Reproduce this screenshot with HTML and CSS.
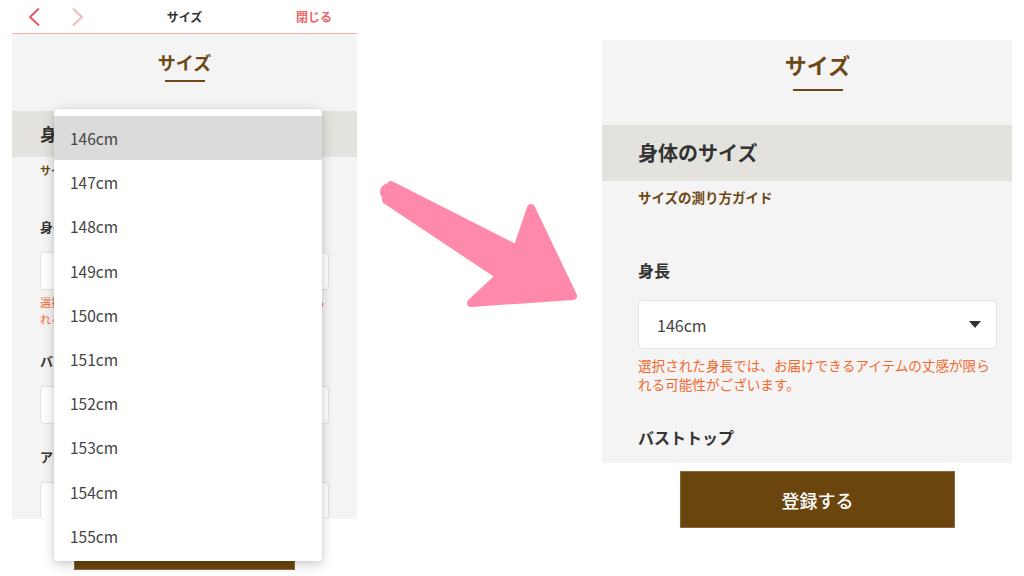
FILE: index.html
```html
<!DOCTYPE html>
<html lang="ja">
<head>
<meta charset="utf-8">
<title>サイズ</title>
<link rel="stylesheet" href="styles.css">
</head>
<body>
<div class="stage">
  <section class="phone">
    <header class="nav">
      <div class="nav-left">
        <svg class="chev chev-back" width="12" height="18" viewBox="0 0 12 18"><polyline points="10.5,1 2,9 10.5,17"/></svg>
        <svg class="chev chev-next" width="12" height="18" viewBox="0 0 12 18"><polyline points="1.5,1 10,9 1.5,17"/></svg>
      </div>
      <div class="nav-title">サイズ</div>
      <div class="nav-close">閉じる</div>
    </header>
    <div class="screen">
      <h1 class="title">サイズ</h1>
      <div class="band">身体のサイズ</div>
      <div class="body">
        <a class="guide">サイズの測り方ガイド</a>
        <div class="field field-first">
          <div class="label">身長</div>
          <div class="select"><span>146cm</span><i class="caret"></i></div>
          <p class="note">選択された身長では、お届けできるアイテムの丈感が限られる可能性がございます。</p>
        </div>
        <div class="field">
          <div class="label">バストトップ</div>
          <div class="select"><span></span><i class="caret"></i></div>
        </div>
        <div class="field">
          <div class="label">アンダーバスト</div>
          <div class="select"><span></span><i class="caret"></i></div>
        </div>
      </div>
    </div>
    <div class="foot"><button class="submit">登録する</button></div>
    <ul class="dropdown">
      <li class="selected">146cm</li>
      <li>147cm</li>
      <li>148cm</li>
      <li>149cm</li>
      <li>150cm</li>
      <li>151cm</li>
      <li>152cm</li>
      <li>153cm</li>
      <li>154cm</li>
      <li>155cm</li>
    </ul>
  </section>

  <div class="arrow-col">
    <svg class="arrow" width="245" height="576" viewBox="357 0 245 576">
      <circle cx="389" cy="192" r="9"/>
      <polygon points="391,185 517,249 531,208 573,296 471,303 500,276 386,200"/>
    </svg>
  </div>

  <div class="panel-col">
    <section class="panel">
      <h1 class="title">サイズ</h1>
      <div class="band">身体のサイズ</div>
      <div class="body">
        <a class="guide">サイズの測り方ガイド</a>
        <div class="field field-first">
          <div class="label">身長</div>
          <div class="select"><span>146cm</span><i class="caret"></i></div>
          <p class="note">選択された身長では、お届けできるアイテムの丈感が限られる可能性がございます。</p>
        </div>
        <div class="field">
          <div class="label">バストトップ</div>
          <div class="select"><span></span><i class="caret"></i></div>
        </div>
      </div>
    </section>
    <div class="panel-foot"><button class="submit">登録する</button></div>
  </div>
</div>
</body>
</html>
```

FILE: styles.css
```css
* { box-sizing: border-box; }

body {
  margin: 0;
  background: #ffffff;
  font-family: "Noto Sans CJK JP", "Noto Sans", sans-serif;
  color: #333333;
}

.stage {
  display: flex;
  width: 1024px;
  height: 576px;
  overflow: hidden;
}

/* ---------- left phone ---------- */
.phone {
  position: relative;
  flex: none;
  width: 345px;
  height: 576px;
  margin-left: 12px;
}

.nav {
  display: grid;
  grid-template-columns: 1fr auto 1fr;
  align-items: center;
  height: 34px;
  border-bottom: 1.5px solid #fbb3b3;
  background: #ffffff;
}

.nav-left {
  display: flex;
  align-items: center;
  gap: 32px;
  padding-left: 16px;
}

.chev { display: block; fill: none; stroke-width: 1.8; stroke-linecap: round; stroke-linejoin: round; }
.chev-back { stroke: #e6535b; }
.chev-next { stroke: #f6b6b8; }

.nav-title {
  font-size: 12px;
  font-weight: 700;
  color: #333333;
}

.nav-close {
  text-align: right;
  padding-right: 25px;
  font-size: 12px;
  font-weight: 700;
  color: #ea6468;
}

.screen {
  height: 484.5px;
  overflow: hidden;
  background: #f4f4f4;
}

.title {
  margin: 0;
  text-align: center;
  font-weight: 700;
  color: #6e4814;
}

.title::after {
  content: "";
  display: block;
  margin: 0 auto;
  background: #6e4814;
}

.phone .title {
  padding-top: 16px;
  font-size: 18px;
  line-height: 24px;
}

.phone .title::after {
  width: 40px;
  height: 2px;
  margin-top: 6px;
}

.band {
  background: #e3e2dd;
  font-weight: 700;
  color: #333333;
}

.phone .band {
  margin-top: 29px;
  height: 46px;
  line-height: 46px;
  padding-left: 28px;
  font-size: 17px;
}

.guide {
  display: block;
  font-weight: 700;
  color: #6e4814;
}

.phone .body { padding: 0 28px; }

.phone .guide {
  margin-top: 5px;
  font-size: 11px;
  line-height: 16px;
}

.label { font-weight: 700; color: #333333; }

.phone .field { margin-top: 24px; }
.phone .field-first { margin-top: 40px; }

.phone .label {
  font-size: 13px;
  line-height: 18px;
}

.select {
  display: flex;
  align-items: center;
  justify-content: space-between;
  background: #ffffff;
  border: 1px solid #e6e3dc;
  border-radius: 4px;
  color: #444444;
}

.phone .select {
  margin-top: 16px;
  height: 38px;
  padding: 0 14px 0 15px;
  font-size: 14px;
}

.caret {
  display: block;
  width: 0;
  height: 0;
  border-style: solid;
  border-color: #333333 transparent transparent transparent;
}

.phone .caret { border-width: 6px 5.5px 0 5.5px; }

.note {
  margin: 0;
  color: #f2692f;
}

.phone .note {
  margin-top: 4px;
  font-size: 11px;
  line-height: 17px;
}

.foot {
  display: flex;
  justify-content: center;
  padding-top: 4px;
}

.submit {
  display: block;
  border: 1px solid #8a6a3c;
  background: #6a450d;
  color: #ffffff;
  font-family: "Noto Sans CJK JP", "Noto Sans", sans-serif;
  font-weight: 500;
  padding: 0;
}

.phone .submit {
  width: 221px;
  height: 47px;
  font-size: 15px;
}

.dropdown {
  position: absolute;
  top: 109px;
  left: 42px;
  width: 268px;
  height: 452px;
  margin: 0;
  padding: 7px 0 0;
  list-style: none;
  background: #ffffff;
  border-radius: 4px;
  box-shadow: 0 3px 12px rgba(0, 0, 0, 0.22), 0 0 2px rgba(0, 0, 0, 0.08);
}

.dropdown li {
  display: flex;
  align-items: center;
  height: 44.2px;
  padding-left: 16px;
  font-size: 15.5px;
  color: #444444;
}

.dropdown li.selected { background: #dbdbdb; }

/* ---------- arrow ---------- */
.arrow-col {
  flex: none;
  width: 245px;
}

.arrow { display: block; }
.arrow circle { fill: #ff89aa; }
.arrow polygon {
  fill: #ff89aa;
  stroke: #ff89aa;
  stroke-width: 8;
  stroke-linejoin: round;
}

/* ---------- right panel ---------- */
.panel-col {
  flex: none;
  width: 410px;
  padding-top: 40px;
}

.panel {
  height: 423px;
  overflow: hidden;
  background: #f4f4f4;
}

.panel .title {
  padding: 9px 15px 0 36px;
  font-size: 22px;
  line-height: 30px;
}

.panel .title::after {
  width: 50px;
  height: 2px;
  margin-top: 10px;
}

.panel .band {
  margin-top: 34px;
  height: 56px;
  line-height: 56px;
  padding-left: 36px;
  font-size: 20px;
}

.panel .body { padding: 0 15px 0 36px; }

.panel .guide {
  margin-top: 7px;
  font-size: 13.5px;
  line-height: 18px;
}

.panel .field { margin-top: 33.5px; }
.panel .field-first { margin-top: 54px; }

.panel .label {
  font-size: 16px;
  line-height: 20px;
}

.panel .select {
  margin-top: 20px;
  height: 49px;
  padding: 0 15.5px 0 18px;
  font-size: 16px;
}

.panel .caret { border-width: 7px 6.5px 0 6.5px; }

.panel .note {
  margin-top: 6.5px;
  font-size: 13.6px;
  line-height: 19px;
}

.panel-foot {
  display: flex;
  justify-content: center;
  padding: 8px 15px 0 36px;
}

.panel-foot .submit {
  width: 275px;
  height: 57px;
  font-size: 18px;
}
```
